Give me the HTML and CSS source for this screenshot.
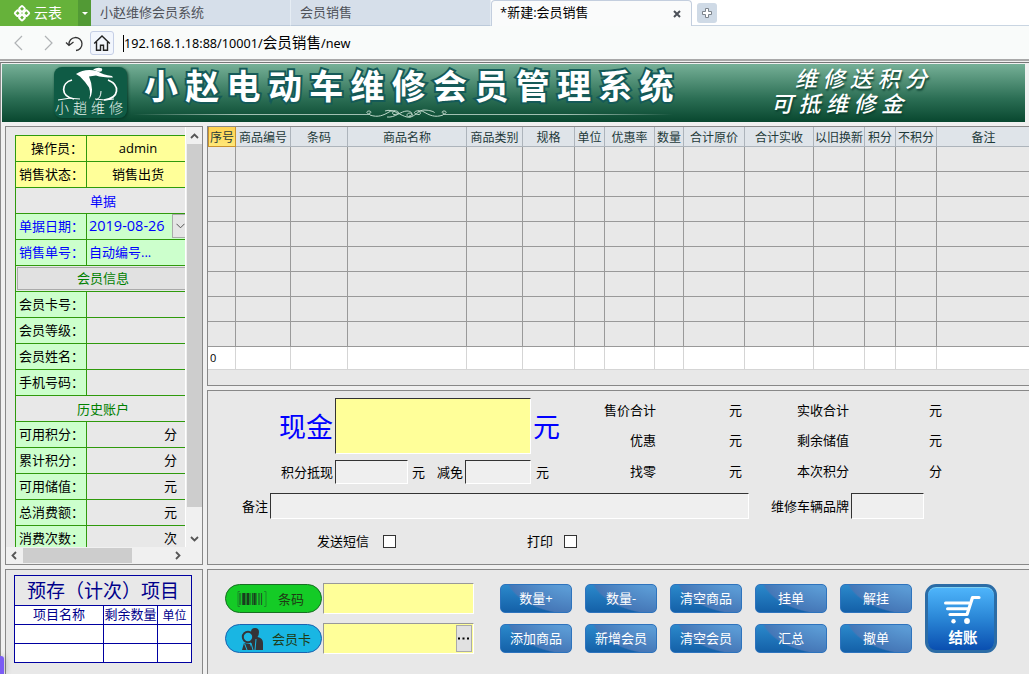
FILE: index.html
```html
<!DOCTYPE html>
<html lang="zh-CN">
<head>
    <meta charset="UTF-8">
    <meta name="viewport" content="width=device-width, initial-scale=1.0">
    <title>新建:会员销售</title>
    <link rel="stylesheet" href="styles.css">
</head>
<body>
    <div class="tabs">
        <div class="brand">
            <svg width="18" height="18" viewBox="0 0 18 18"><g transform="rotate(45 9 9)" fill="none" stroke="#fff" stroke-width="1.9"><rect x="3.8" y="3.8" width="4.600" height="4.600" rx="1"/><rect x="9.900" y="3.8" width="4.600" height="4.600" rx="1"/><rect x="3.8" y="9.900" width="4.600" height="4.600" rx="1"/><rect x="9.900" y="9.900" width="4.600" height="4.600" rx="1"/></g></svg>
            <span>云表</span>
        </div>
        <div class="brand-arrow"></div>
        <div class="tab">小赵维修会员系统</div>
        <div class="tab">会员销售</div>
        <div class="tab active">*新建:会员销售
            <svg width="8" height="8" viewBox="0 0 8 8"><path d="M1 1l6 6M7 1L1 7" stroke="#4b5058" stroke-width="2"/></svg>
        </div>
        <div class="tab-rest">
            <div class="new-tab"><svg width="12" height="12" viewBox="0 0 12 12"><path d="M4.5 1.5h3v3h3v3h-3v3h-3v-3h-3v-3h3z" fill="#fff" stroke="#7d848c"/></svg></div>
        </div>
    </div>

    <div class="toolbar">
        <svg width="28" height="24" viewBox="0 0 28 24"><path d="M14 5l-7 7 7 7" fill="none" stroke="#b0b3b5" stroke-width="1.200"/></svg>
        <svg width="28" height="24" viewBox="0 0 28 24"><path d="M9 5l7 7-7 7" fill="none" stroke="#b0b3b5" stroke-width="1.200"/></svg>
        <svg width="26" height="24" viewBox="0 0 26 24"><path d="M5 13.500a6.500 6.500 0 1 1 7 6M2 11.500l3 3 4.500-3.500" fill="none" stroke="#333" stroke-width="1.300"/></svg>
        <div class="home"><svg width="18" height="18" viewBox="0 0 18 18"><path d="M1.200 9.500L9 2l7.800 7.500M3.500 8v8.300h4v-5h3v5h4V8" fill="none" stroke="#222" stroke-width="1.400"/></svg></div>
        <div class="url"><span class="num">192.168.1.18:88/10001/</span><span class="zh">会员销售</span><span class="num">/new</span></div>
    </div>

    <div class="window">
        <div class="banner">
            <div class="logo">
                <svg width="72" height="36" viewBox="0 0 72 36">
                    <path d="M18 13C7 16 6 29 20 32M54 13C66 18 66 31 50 33" fill="none" stroke="#fff" stroke-width="1.700"/>
                    <path d="M4 33q11-3 22-1M41 32q10 2 19 0M47 24q0 7-5 9" fill="none" stroke="#fff" stroke-width="1"/>
                    <path d="M22 7Q31 1 43 4q6 4 15 5l1 1.500q-11 0-17-2l-7 1q3 7 3 13 0 6-3 10 2-6 0-12-3-5-9-11z" fill="#fff"/>
                    <path d="M39 2.500q5-3 9-1 1 4-4 3z" fill="#fff"/>
                </svg>
                <span>小趙维修</span>
            </div>
            <div class="title-box">
                <h1>小赵电动车维修会员管理系统</h1>
                <svg width="540" height="10" viewBox="0 0 540 10">
                    <defs><linearGradient id="fade"><stop offset="0" stop-color="#fff" stop-opacity="0"/><stop offset=".2" stop-color="#cfe3d9"/><stop offset=".8" stop-color="#cfe3d9"/><stop offset="1" stop-color="#fff" stop-opacity="0"/></linearGradient></defs>
                    <path d="M0 5h237v.8H0zM310 5h230v.8H310z" fill="url(#fade)"/>
                    <path d="M237 5c-4 0-4-3-1-3s2 3 0 2M237 6c8 3 14 0 19-3s13 0 8 2-6-2-2-3M252 2c8-3 16 5 22 6s7-4 3-4-4 4 0 4 9-7 14-7 12 2 10 3M254 8c8 1 14-6 20-6s6 5 2 5M310 5c4 0 4-3 1-3s-2 3 0 2M310 6c-8 3-14 0-19-3s-13 0-8 2 6-2 2-3" fill="none" stroke="#bfd8cb" stroke-width="1"/>
                </svg>
            </div>
            <div class="slogan"><p>维修送积分</p><p>可抵维修金</p></div>
        </div>

        <div class="main">
            <div class="left">
                <div class="panel info">
                    <div class="info-view">
                        <table class="info-table">
                            <tr class="yellow"><th class="end">操作员：</th><td class="mid">admin</td></tr>
                            <tr class="yellow"><th>销售状态：</th><td class="mid">销售出货</td></tr>
                            <tr><td colspan="2" class="head blue">单据</td></tr>
                            <tr class="green blue"><th>单据日期：</th><td><div class="date">2019-08-26<i><svg width="9" height="6" viewBox="0 0 9 6"><path d="M.5.800l4 4 4-4" fill="none" stroke="#555"/></svg></i></div></td></tr>
                            <tr class="green blue"><th>销售单号：</th><td>自动编号...</td></tr>
                            <tr><td colspan="2" class="head"><div class="head-btn">会员信息</div></td></tr>
                            <tr><th>会员卡号：</th><td></td></tr>
                            <tr><th>会员等级：</th><td></td></tr>
                            <tr><th>会员姓名：</th><td></td></tr>
                            <tr><th>手机号码：</th><td></td></tr>
                            <tr><td colspan="2" class="head history">历史账户</td></tr>
                            <tr><th>可用积分：</th><td class="unit">分</td></tr>
                            <tr><th>累计积分：</th><td class="unit">分</td></tr>
                            <tr><th>可用储值：</th><td class="unit">元</td></tr>
                            <tr><th>总消费额：</th><td class="unit">元</td></tr>
                            <tr><th>消费次数：</th><td class="unit">次</td></tr>
                        </table>
                    </div>
                    <div class="vbar">
                        <svg width="9" height="6" viewBox="0 0 9 6"><path d="M1 5l3.500-3.500L8 5" fill="none" stroke="#555" stroke-width="1.800"/></svg>
                        <div class="thumb"></div>
                        <svg width="9" height="6" viewBox="0 0 9 6"><path d="M1 1l3.500 3.500L8 1" fill="none" stroke="#555" stroke-width="1.800"/></svg>
                    </div>
                    <div class="hbar">
                        <svg width="6" height="9" viewBox="0 0 6 9"><path d="M5 1L1.500 4.500 5 8" fill="none" stroke="#555" stroke-width="1.800"/></svg>
                        <div class="thumb"></div>
                        <svg width="6" height="9" viewBox="0 0 6 9"><path d="M1 1l3.500 3.500L1 8" fill="none" stroke="#555" stroke-width="1.800"/></svg>
                    </div>
                </div>
                <div class="panel prepay">
                    <table class="prepay-table">
                        <colgroup><col class="c1"><col class="c2"><col class="c3"></colgroup>
                        <tr class="big"><td colspan="3">预存（计次）项目</td></tr>
                        <tr><td>项目名称</td><td>剩余数量</td><td class="low">单位</td></tr>
                        <tr><td></td><td></td><td></td></tr>
                        <tr><td></td><td></td><td></td></tr>
                    </table>
                </div>
            </div>

            <div class="right">
                <div class="panel goods">
                    <div class="grid" id="grid">
                        <div class="th first">序号</div><div class="th">商品编号</div><div class="th">条码</div><div class="th">商品名称</div><div class="th">商品类别</div><div class="th">规格</div><div class="th">单位</div><div class="th">优惠率</div><div class="th">数量</div><div class="th">合计原价</div><div class="th">合计实收</div><div class="th">以旧换新</div><div class="th">积分</div><div class="th">不积分</div><div class="th">备注</div>
                    </div>
                </div>

                <div class="panel pay">
                    <div class="pay-top">
                        <div class="pay-left">
                            <div class="row cash"><label>现金</label><div class="input cash-input"></div><span>元</span></div>
                            <div class="row second"><label>积分抵现</label><div class="input w73"></div><span>元</span><span class="cut">减免</span><div class="input w66"></div><span>元</span></div>
                        </div>
                        <div class="totals">
                            <span>售价合计</span><span>元</span><span>实收合计</span><span>元</span>
                            <span>优惠</span><span>元</span><span>剩余储值</span><span>元</span>
                            <span>找零</span><span>元</span><span>本次积分</span><span>分</span>
                        </div>
                    </div>
                    <div class="row remark"><label>备注</label><div class="input w479"></div><label class="car">维修车辆品牌</label><div class="input w73"></div></div>
                    <div class="row checks"><span>发送短信</span><i class="check"></i><span class="print">打印</span><i class="check"></i></div>
                </div>

                <div class="panel actions">
                    <div class="scan">
                        <div class="scan-row">
                            <div class="pill barcode">
                                <svg width="30" height="16" viewBox="0 0 30 16"><path d="M3 2v12M5.500 2v12M9 2v12M13 2v12M15.500 2v12M19 2v12M22 2v12M24.500 2v12" stroke="#1d5a26" stroke-width="1.200"/><path d="M7 2v12M11 2v12M17.500 2v12" stroke="#173f1c" stroke-width="2"/><path d="M3 .5H1v15h2M27 .5h2v15h-2" fill="none" stroke="#1d7a2a" stroke-width=".8"/></svg>
                                <span>条码</span>
                            </div>
                            <div class="field"></div>
                        </div>
                        <div class="scan-row">
                            <div class="pill card">
                                <svg width="24" height="24" viewBox="0 0 24 24"><path d="M11 5q0-4 4-4t4 4q0 3-1.500 5 5.500 1 5.500 6v7H11z" fill="#353437"/><path d="M2 23l2-7 6 1 2 6z" fill="#353437"/><circle cx="8" cy="10" r="5.200" fill="#19b6e3" stroke="#353437" stroke-width="2"/><path d="M16 12l-1 11M4.500 16.500l2.500 6.500M11 16l2 7" stroke="#19b6e3"/></svg>
                                <span>会员卡</span>
                            </div>
                            <div class="field"><i class="more"><svg width="12" height="3" viewBox="0 0 12 3"><path d="M0 .5h2v2H0zM4.500.5h2v2h-2zM9 .5h2v2H9z"/></svg></i></div>
                        </div>
                    </div>
                    <div class="buttons">
                        <button>数量+</button><button>数量-</button><button>清空商品</button><button>挂单</button><button>解挂</button>
                        <button>添加商品</button><button>新增会员</button><button>清空会员</button><button>汇总</button><button>撤单</button>
                    </div>
                    <button class="checkout">
                        <svg width="38" height="31" viewBox="0 0 38 31"><path d="M36 3.500h-6.500L24 20.500H7" fill="none" stroke="#fff" stroke-width="3.200" stroke-linecap="round" stroke-linejoin="round"/><path d="M2.500 9H26M4.500 14.800H24.500" stroke="#fff" stroke-width="3" stroke-linecap="round"/><circle cx="10.500" cy="27.200" r="2.200" fill="#fff"/><circle cx="24" cy="27" r="2.900" fill="#fff"/></svg>
                        <span>结账</span>
                    </button>
                </div>
            </div>
        </div>
    </div>
    <div class="float-tag"></div>

    <script>
        // 8 empty rows and the total row
        let grid = document.getElementById("grid");
        for (let r = 0; r < 9; r++) {
            for (let c = 0; c < 15; c++) {
                let cell = document.createElement("div");
                cell.className = r == 8 ? "total" : "cell";
                if (r == 8 && c == 0) cell.textContent = "0";
                grid.appendChild(cell);
            }
        }
    </script>
</body>
</html>
```
FILE: styles.css
```css
* {
    margin: 0;
    padding: 0;
    box-sizing: border-box;
}

body {
    width: 1029px;
    height: 674px;
    overflow: hidden;
    background: #f0f0f0;
    font-family: "Open Sans", "Noto Sans CJK SC", sans-serif;
    font-size: 13px;
    line-height: 18px;
    color: #000;
    display: flex;
    flex-direction: column;
}

svg {
    display: block;
    flex: none;
}

i {
    font-style: normal;
}

/* tabs */
.tabs {
    display: flex;
    height: 26px;
    flex: none;
    background: #fff;
}

.brand {
    width: 78px;
    padding: 0 0 0 13px;
    display: flex;
    align-items: center;
    gap: 3px;
    background: #66b23a;
    color: #fff;
    font-size: 14px;
}

.brand-arrow {
    width: 13px;
    background: #529a35;
    display: flex;
    align-items: center;
    justify-content: center;
}

.brand-arrow::after {
    content: "";
    border: 3px solid transparent;
    border-top-color: #fff;
    border-bottom: 0;
}

.tab {
    width: 200px;
    padding: 3px 0 0 9px;
    background: #d6dfea;
    border-bottom: 1px solid #bccada;
    border-right: 1px solid #e6edf4;
    color: #4f5259;
}

.tab.active {
    width: 201px;
    display: flex;
    justify-content: space-between;
    padding-right: 10px;
    background: #fafbfb;
    border: 1px solid #c3cede;
    border-bottom: 0;
    border-radius: 4px 4px 0 0;
    padding-top: 2px;
    padding-left: 8px;
    color: #000;
}

.tab.active svg {
    margin-top: 7px;
}

.tab-rest {
    flex: 1;
    padding: 3px 0 0 5px;
    border-bottom: 1px solid #c9d5e2;
}

.new-tab {
    width: 20px;
    height: 20px;
    border-radius: 3px;
    background: #cfdae6;
    display: flex;
    align-items: center;
    justify-content: center;
}

/* address bar */
.toolbar {
    display: flex;
    align-items: center;
    height: 35px;
    flex: none;
    padding: 1px 0 0 8px;
    background: #f9fbfa;
    border-bottom: 2px solid #a9a9a9;
}

.home {
    width: 24px;
    height: 24px;
    border: 1px solid #c5cfe6;
    border-radius: 3px;
    background: #f2f6fd;
    display: flex;
    align-items: center;
    justify-content: center;
}

.url {
    margin-left: 9px;
    border-left: 1px solid #000;
    display: flex;
    align-items: center;
    height: 17px;
    white-space: nowrap;
}

.url .num {
    font-family: "Noto Sans", sans-serif;
    font-size: 12.650px;
}

.url .zh {
    font-size: 14.600px;
    margin-top: -2px;
}

/* page window */
.window {
    flex: 1;
    margin-top: 1px;
    border-top: 1px solid #777;
    border-left: 1px solid #8a8a8a;
    padding: 1px 0 0 1px;
    min-height: 0;
}

.banner {
    width: 1023px;
    height: 58px;
    background: linear-gradient(#76b097, #2b6e54 60%, #08472f);
    display: flex;
}

.logo {
    width: 73px;
    height: 51px;
    margin: 3px 0 0 52px;
    border-radius: 8px;
    background: #0f5b45;
    box-shadow: 1px 1px 3px #063826;
    color: #e4f2ea;
    overflow: hidden;
}

.logo span {
    display: block;
    padding-left: 1px;
    margin-top: -4px;
    font-size: 14px;
    letter-spacing: 4px;
    font-weight: 300;
    white-space: nowrap;
}

.title-box {
    width: 540px;
    margin-left: 6px;
}

.title-box h1 {
    height: 45px;
    padding-left: 11px;
    line-height: 45px;
    font-size: 34px;
    font-weight: 700;
    letter-spacing: 7.300px;
    white-space: nowrap;
    color: #fff;
    -webkit-text-stroke: 4px #155a58;
    paint-order: stroke fill;
}

.slogan {
    margin-left: 98px;
    font-size: 22px;
    line-height: 25px;
    font-weight: 500;
    font-style: italic;
    letter-spacing: 5.500px;
    white-space: nowrap;
    color: #fff;
    text-shadow: 1px 2px 2px #0c4030;
    padding-top: 2px;
}

.slogan p:first-child {
    padding-left: 24px;
}

.main {
    display: flex;
    gap: 4px;
    height: 548px;
    padding: 4px 0 0 3px;
}

.left {
    width: 198px;
    display: flex;
    flex-direction: column;
    gap: 4px;
}

.right {
    flex: 1;
    min-width: 0;
    display: flex;
    flex-direction: column;
    gap: 4px;
}

.panel {
    flex: none;
    background: #e8e8e8;
    border: 1px solid #888;
}

.right .panel {
    border-right: 0;
}

/* member info */
.info {
    height: 439px;
    display: grid;
    grid-template-columns: 180px 16px;
    grid-template-rows: 420px 17px;
}

.info-view {
    overflow: hidden;
    padding: 8px 0 0 9px;
    border-right: 1px solid #fff;
}

.info-table {
    width: 190px;
    table-layout: fixed;
    border-collapse: collapse;
    font-size: 13px;
}

.info-table tr {
    height: 26px;
}

.info-table th,
.info-table td {
    height: 26px;
    padding-bottom: 1px;
    border: 1px solid #2f9a0c;
    line-height: 18px;
    white-space: nowrap;
}

.info-table th {
    width: 71px;
    padding-left: 3px;
    text-align: left;
    font-weight: 400;
    background: #ccffcc;
    overflow: hidden;
}

.info-table th.end {
    padding-left: 15px;
}

.info-table td {
    padding-left: 2px;
}

.info-table .yellow th,
.info-table .yellow td {
    background: #ffff99;
}

.info-table .green td {
    background: #ccffcc;
}

.info-table .blue,
.info-table .blue th {
    color: #0000ff;
}

.info-table .mid {
    padding-left: 0;
    padding-right: 15px;
    text-align: center;
}

.info-table .unit {
    padding-right: 27px;
    text-align: right;
}

.info-table .head {
    padding: 0 14px 0 0;
    text-align: center;
}

.info-table .history {
    color: #008000;
}

.head-btn {
    width: 190px;
    height: 23px;
    margin: 1px;
    padding-right: 18px;
    border: 1px solid #aaa;
    background: #e1e1e1;
    color: #008000;
    line-height: 21px;
}

.date {
    display: flex;
    width: 100px;
    height: 24px;
    align-items: center;
    justify-content: space-between;
    font-size: 14.500px;
}

.date i {
    width: 17px;
    height: 24px;
    border: 1px solid #aaa;
    background: #e5e5e5;
    display: flex;
    align-items: center;
    justify-content: center;
}

.vbar {
    display: flex;
    flex-direction: column;
    align-items: center;
    padding: 6px 0 5px;
    background: #f0f0f0;
}

.vbar .thumb {
    width: 15px;
    height: 363px;
    margin: 5px 0 auto;
    background: #cdcdcd;
}

.hbar {
    grid-column: 1 / 3;
    display: flex;
    align-items: center;
    padding: 0 21px 0 5px;
    background: #f0f0f0;
}

.hbar .thumb {
    width: 109px;
    height: 15px;
    margin: 0 auto 0 6px;
    background: #cdcdcd;
}

/* prepaid items */
.prepay {
    height: 108px;
    padding: 5px 0 0 8px;
}

.prepay-table {
    width: 178px;
    table-layout: fixed;
    border-collapse: collapse;
    color: #00008b;
    font-size: 13px;
    text-align: center;
}

.c1 {
    width: 89px;
}

.c2 {
    width: 54px;
}

.c3 {
    width: 34px;
}

.prepay-table td {
    height: 19px;
    border: 1px solid #0000a0;
    background: #fff;
    line-height: 16px;
    padding-bottom: 2px;
    white-space: nowrap;
}

.prepay-table .low {
    padding: 2px 0 0;
    font-size: 12px;
}

.prepay-table .big td {
    height: 30px;
    background: #e8e8e8;
    font-size: 19px;
    line-height: 28px;
    padding: 0;
}

/* goods grid */
.goods {
    height: 260px;
    overflow: hidden;
}

.grid {
    display: grid;
    grid-template-columns: 28px 55px 57px 119px 56px 52px 30px 50px 29px 61px 69px 51px 31px 41px 93px;
    grid-template-rows: 20px repeat(8, 25px) 23px;
}

.grid div {
    border-right: 1px solid #999;
    border-bottom: 1px solid #999;
}

.grid .th {
    background: #dfe4e9;
    border-color: #adb4bb;
    color: #1e3a3a;
    font-size: 12px;
    line-height: 21px;
    text-align: center;
    white-space: nowrap;
}

.grid .first {
    background: linear-gradient(#ffd250, #ffe878);
    border: 1px solid #c9922e;
    border-top: 0;
}

.grid .total {
    background: #fff;
    border-color: #d5d5d5;
    padding-left: 2px;
    font-size: 11px;
    line-height: 22px;
}

.grid div:nth-child(15n) {
    border-right: 0;
}

/* payment */
.pay {
    height: 175px;
}

.row {
    display: flex;
    align-items: center;
    white-space: nowrap;
}

.pay label {
    width: 127px;
    padding-right: 2px;
    text-align: right;
}

.row label,
.row span {
    margin-top: -1px;
}

.input {
    flex: none;
    height: 24px;
    background: #efefef;
    border: 1px solid #fff;
    border-top-color: #333;
    border-left-color: #333;
}

.pay-top {
    display: flex;
    height: 102px;
}

.pay-left {
    width: 360px;
    padding-top: 7px;
}

.cash {
    height: 56px;
    margin-bottom: 6px;
    color: #0000ff;
    font-size: 27px;
    line-height: 40px;
}

.cash label,
.cash span {
    margin-top: 1px;
}

.cash span {
    padding-left: 2px;
}

.cash .cash-input {
    width: 196px;
    height: 56px;
    background: #ffff99;
}

.second span {
    padding-left: 4px;
}

.second .cut {
    padding: 0 2px 0 12px;
}

.second span:last-child {
    padding-left: 5px;
}

.w73 {
    width: 73px;
}

.w66 {
    width: 66px;
}

.w479 {
    width: 479px;
}

.totals {
    display: grid;
    grid-template-columns: 88px 86px 107px 93px;
    grid-auto-rows: 30.300px;
    padding-top: 4px;
    line-height: 30px;
    text-align: right;
}

.remark label {
    width: 62px;
}

.remark .car {
    width: 102px;
}

.remark .input {
    height: 26px;
}

.checks {
    height: 24px;
    margin-top: 10px;
    padding-left: 109px;
}

.check {
    width: 13px;
    height: 13px;
    margin-left: 14px;
    border: 1px solid #333;
    background: #fff;
}

.print {
    margin-left: 131px;
}

.print + .check {
    margin-left: 11px;
}

/* bottom actions */
.actions {
    height: 108px;
    display: flex;
    padding: 13px 0 0 17px;
}

.scan {
    width: 275px;
    display: flex;
    flex-direction: column;
    gap: 9px;
}

.scan-row {
    display: flex;
    align-items: center;
    gap: 1px;
}

.pill {
    width: 97px;
    height: 29px;
    border-radius: 15px;
    display: flex;
    align-items: center;
    color: #1f3b14;
}

.barcode {
    padding-left: 11px;
    gap: 11px;
    background: #14cb26;
    border: 1px solid #176f22;
}

.card {
    padding-left: 14px;
    gap: 8px;
    background: #19b6e3;
    border: 1px solid #1a62b0;
}

.field {
    width: 151px;
    height: 31px;
    background: #ffff99;
    border: 1px solid #fff;
    border-top-color: #999;
    border-left-color: #999;
    display: flex;
    justify-content: flex-end;
    padding: 1px;
}

.more {
    width: 16px;
    height: 27px;
    border: 1px solid #aaa;
    background: #e1e1e1;
    display: flex;
    align-items: center;
    justify-content: center;
}

button {
    border: 0;
    color: #fff;
    font: inherit;
}

.buttons {
    display: grid;
    grid-template-columns: repeat(5, 72px);
    grid-template-rows: 29px 29px;
    gap: 11px 13px;
    margin-top: 1px;
}

.buttons button {
    border: 1px solid #2d73bd;
    border-radius: 5px;
    padding-bottom: 1px;
    white-space: nowrap;
    background:
        radial-gradient(ellipse 72px 42px at 108% -45%, #5b9bd5 0, #5b9bd5 40%, #4577b7 97%, transparent 100%),
        linear-gradient(#2b89cb, #1460a8);
}

.checkout {
    width: 72px;
    height: 69px;
    margin: 1px 0 0 13px;
    border: 3px solid #2b6ca6;
    border-radius: 11px;
    background: linear-gradient(#4fb6fc, #2a86d6 50%, #0a4fb0);
    box-shadow: inset 0 1px 0 #7fd0f0;
    display: flex;
    flex-direction: column;
    align-items: center;
    padding-top: 7px;
    font-size: 14.500px;
    font-weight: 700;
}

.checkout svg {
    margin-left: 1px;
}

.checkout span {
    margin: 4px 0 0 4px;
}

/* floating assistant handle, sits over the page edge */
.float-tag {
    position: absolute;
    left: 0;
    top: 656px;
    width: 4px;
    height: 18px;
    border-radius: 0 3px 0 0;
    background: #7b5cf5;
    box-shadow: 1px 0 6px rgba(0, 0, 0, 0.3);
}
```
